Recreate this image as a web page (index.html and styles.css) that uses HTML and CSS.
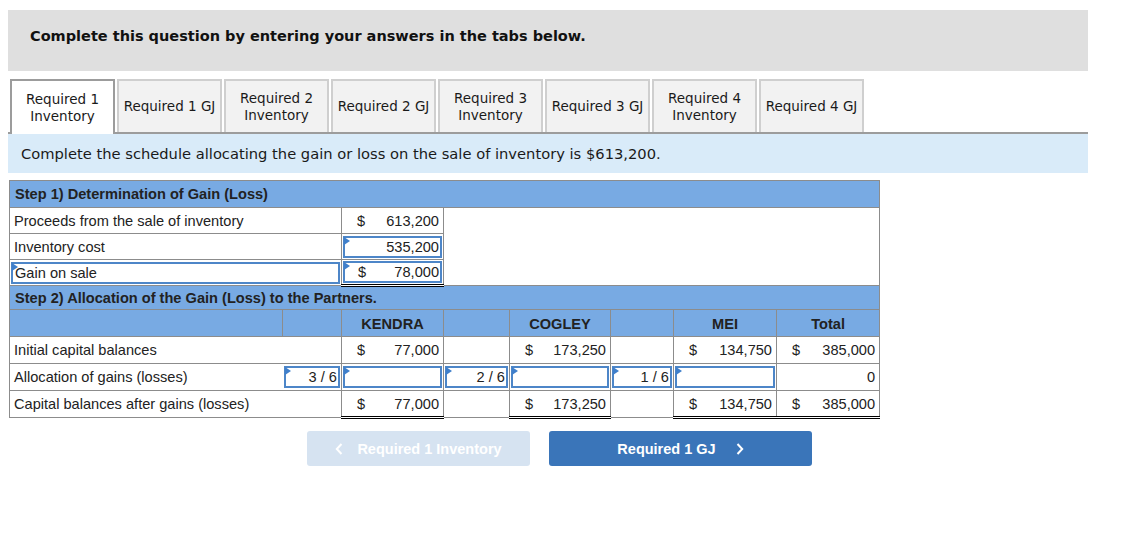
FILE: index.html
```html
<!DOCTYPE html>
<html>
<head>
<meta charset="utf-8">
<link rel="stylesheet" href="styles.css">
</head>
<body>
<div class="qhead">Complete this question by entering your answers in the tabs below.</div>
<div class="tabs">
  <div class="tab active">Required 1<br>Inventory</div>
  <div class="tab">Required 1 GJ</div>
  <div class="tab">Required 2<br>Inventory</div>
  <div class="tab">Required 2 GJ</div>
  <div class="tab">Required 3<br>Inventory</div>
  <div class="tab">Required 3 GJ</div>
  <div class="tab">Required 4<br>Inventory</div>
  <div class="tab">Required 4 GJ</div>
</div>
<div class="instr">Complete the schedule allocating the gain or loss on the sale of inventory is $613,200.</div>

<table class="sched">
  <colgroup>
    <col class="c-label"><col class="c-r1"><col class="c-amt1"><col class="c-r2"><col class="c-amt2"><col class="c-r3"><col class="c-amt3"><col class="c-tot">
  </colgroup>
  <tr class="hdr"><td colspan="8">Step 1) Determination of Gain (Loss)</td></tr>
  <tr class="s1">
    <td colspan="2" class="lbl">Proceeds from the sale of inventory</td>
    <td class="amt"><span class="cur">$</span><span class="num">613,200</span></td>
    <td colspan="5" class="blank"></td>
  </tr>
  <tr class="s1">
    <td colspan="2" class="lbl">Inventory cost</td>
    <td class="inp-td"><div class="inp"><span class="num">535,200</span></div></td>
    <td colspan="5" class="blank"></td>
  </tr>
  <tr class="s1">
    <td colspan="2" class="inp-td"><div class="inp left">Gain on sale</div></td>
    <td class="inp-td dbl topblack"><div class="inp"><span class="cur">$</span><span class="num">78,000</span></div></td>
    <td colspan="5" class="blank"></td>
  </tr>
  <tr class="hdr hdr2"><td colspan="8">Step 2) Allocation of the Gain (Loss) to the Partners.</td></tr>
  <tr class="colhdr">
    <td></td><td></td><td>KENDRA</td><td></td><td>COGLEY</td><td></td><td>MEI</td><td>Total</td>
  </tr>
  <tr class="s2">
    <td class="lbl nr">Initial capital balances</td><td class="nl"></td>
    <td class="amt"><span class="cur">$</span><span class="num">77,000</span></td>
    <td></td>
    <td class="amt"><span class="cur">$</span><span class="num">173,250</span></td>
    <td></td>
    <td class="amt"><span class="cur">$</span><span class="num">134,750</span></td>
    <td class="amt"><span class="cur">$</span><span class="num">385,000</span></td>
  </tr>
  <tr class="s2">
    <td class="lbl nr">Allocation of gains (losses)</td>
    <td class="inp-td nl"><div class="inp"><span class="num">3 / 6</span></div></td>
    <td class="inp-td"><div class="inp"></div></td>
    <td class="inp-td"><div class="inp"><span class="num">2 / 6</span></div></td>
    <td class="inp-td"><div class="inp"></div></td>
    <td class="inp-td"><div class="inp"><span class="num">1 / 6</span></div></td>
    <td class="inp-td"><div class="inp"></div></td>
    <td class="amt"><span class="num">0</span></td>
  </tr>
  <tr class="s2">
    <td class="lbl nr">Capital balances after gains (losses)</td><td class="nl"></td>
    <td class="amt dbl topblack"><span class="cur">$</span><span class="num">77,000</span></td>
    <td></td>
    <td class="amt dbl topblack"><span class="cur">$</span><span class="num">173,250</span></td>
    <td></td>
    <td class="amt dbl topblack"><span class="cur">$</span><span class="num">134,750</span></td>
    <td class="amt dbl topblack"><span class="cur">$</span><span class="num">385,000</span></td>
  </tr>
</table>

<div class="nav">
  <button class="btn prev"><svg class="chev" width="8" height="12" viewBox="0 0 8 12"><path d="M6.5 1 L1.8 6 L6.5 11" fill="none" stroke="#fff" stroke-width="2"/></svg><span>Required 1 Inventory</span></button>
  <button class="btn next"><span>Required 1 GJ</span><svg class="chev" width="8" height="12" viewBox="0 0 8 12"><path d="M1.5 1 L6.2 6 L1.5 11" fill="none" stroke="#fff" stroke-width="2"/></svg></button>
</div>
</body>
</html>
```

FILE: styles.css
```css
body {
  margin: 8px;
  background: #fff;
  color: #1f1f1f;
}

.qhead {
  margin-top: 2px;
  width: 1080px;
  height: 61px;
  box-sizing: border-box;
  padding: 17px 0 0 22px;
  background: #dfdfdf;
  font-family: "DejaVu Sans", Verdana, sans-serif;
  font-weight: bold;
  font-size: 14.5px;
  line-height: 18px;
  color: #111;
}

.tabs {
  margin-top: 8px;
  width: 1080px;
  display: flex;
  gap: 2px;
  padding-left: 2px;
  box-sizing: border-box;
  border-bottom: 2px solid #9c9c9c;
}

.tab {
  width: 105px;
  height: 53px;
  box-sizing: border-box;
  background: #f2f2f2;
  border: 2px solid #cfcfcf;
  border-bottom: none;
  display: flex;
  align-items: center;
  justify-content: center;
  text-align: center;
  font-family: "DejaVu Sans", Verdana, sans-serif;
  font-size: 13.5px;
  line-height: 17px;
  color: #1a1a1a;
}

.tab.active {
  background: #fff;
  border-color: #9c9c9c;
  margin-bottom: -2px;
  height: 55px;
}

.instr {
  width: 1080px;
  height: 39px;
  box-sizing: border-box;
  padding: 11px 0 0 13px;
  background: #d9ebf9;
  font-family: "DejaVu Sans", Verdana, sans-serif;
  font-size: 14.7px;
  line-height: 18px;
  color: #1a1a1a;
}

.sched {
  margin: 7px 0 0 1px;
  border-collapse: collapse;
  width: 870px;
  table-layout: fixed;
  font-family: "Liberation Sans", Arial, sans-serif;
  font-size: 14.6px;
  color: #222;
  border: 1px solid #8c8c8c;
}

.c-label { width: 273px; }
.c-r1 { width: 59px; }
.c-amt1 { width: 102px; }
.c-r2 { width: 66px; }
.c-amt2 { width: 101px; }
.c-r3 { width: 63px; }
.c-amt3 { width: 103px; }
.c-tot { width: 103px; }

.sched td {
  padding: 0 4px;
  height: 26px;
  box-sizing: border-box;
  border: 1px solid #8c8c8c;
  white-space: nowrap;
}

.hdr td {
  background: #78aae3;
  font-weight: bold;
  height: 27px;
  padding-left: 5px;
  padding-top: 0;
  color: #222;
}

.hdr2 td {
  height: 24px;
  border-bottom: 1px solid #8c8c8c;
}

.colhdr td {
  background: #78aae3;
  font-weight: bold;
  text-align: center;
  height: 27px;
  padding-top: 1px;
  color: #222;
}

.s2 td {
  height: 27px;
}

.lbl {
  padding-left: 4px;
}

.sched td.nr { border-right: none; }
.sched td.nl { border-left: none; }

.sched td.blank {
  border: none;
  border-left: 1px solid #8c8c8c;
}

.amt {
  text-align: right;
}

.sched td.amt {
  padding: 0 4px 0 15px;
}

.amt .cur, .inp .cur {
  float: left;
}

.sched td.inp-td {
  padding: 1px 1px;
}

.inp {
  position: relative;
  display: block;
  height: 22px;
  box-sizing: border-box;
  border: 2px solid #4d86c8;
  padding: 0 1px 0 13px;
  text-align: right;
  line-height: 19px;
}

.inp::before {
  content: "";
  position: absolute;
  left: -1px;
  top: -1px;
  border-top: 4px solid transparent;
  border-bottom: 4px solid transparent;
  border-left: 6px solid #3f7fcb;
}

.inp.left {
  text-align: left;
  padding-left: 2px;
}

.sched td.dbl {
  border-bottom: 3px double #000;
}

.sched td.topblack {
  border-top: 1px solid #000;
}

.nav {
  display: flex;
  gap: 19px;
  margin-top: 12px;
  padding-left: 299px;
}

.btn {
  height: 35px;
  border: none;
  border-radius: 3px;
  font-family: "Liberation Sans", Arial, sans-serif;
  font-weight: bold;
  font-size: 14.5px;
  color: #fff;
  display: flex;
  align-items: center;
  justify-content: center;
  gap: 14px;
  padding: 0;
}

.prev {
  width: 223px;
  background: #d6e3f1;
}

.next {
  width: 263px;
  background: #3a75b9;
  gap: 20px;
}

.chev {
  display: block;
}
```
